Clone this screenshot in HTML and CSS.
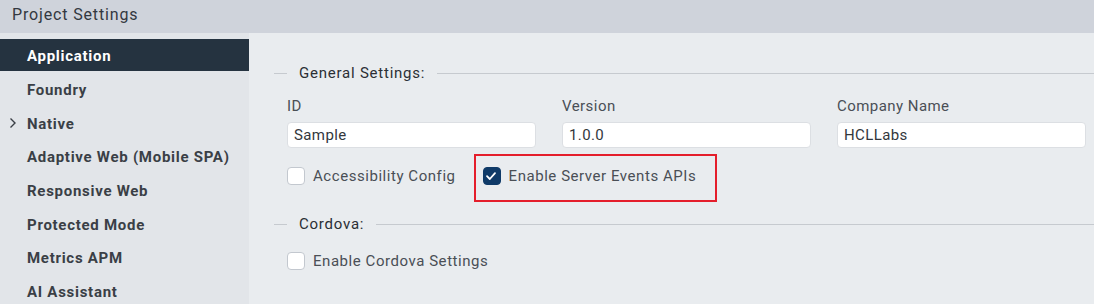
FILE: index.html
```html
<!DOCTYPE html>
<html>
<head>
<meta charset="utf-8">
<link rel="stylesheet" href="styles.css">
</head>
<body>
<div class="app">
  <header class="title-bar">Project Settings</header>
  <div class="body">
    <nav class="sidebar">
      <div class="nav-item active">Application</div>
      <div class="nav-item">Foundry</div>
      <div class="nav-item has-children"><svg class="chev" viewBox="0 0 8 12" width="8" height="12"><path d="M1.5 1.5 L6 6 L1.5 10.5" fill="none" stroke="#3a3f46" stroke-width="1.4"/></svg>Native</div>
      <div class="nav-item">Adaptive Web (Mobile SPA)</div>
      <div class="nav-item">Responsive Web</div>
      <div class="nav-item">Protected Mode</div>
      <div class="nav-item">Metrics APM</div>
      <div class="nav-item">AI Assistant</div>
    </nav>
    <main class="content">
      <section class="group">
        <div class="legend"><span class="lead"></span><span class="legend-text">General Settings:</span><span class="rule"></span></div>
        <div class="group-body">
          <div class="fields">
            <div class="field">
              <label class="field-label">ID</label>
              <div class="input">Sample</div>
            </div>
            <div class="field">
              <label class="field-label">Version</label>
              <div class="input">1.0.0</div>
            </div>
            <div class="field">
              <label class="field-label">Company Name</label>
              <div class="input">HCLLabs</div>
            </div>
          </div>
          <div class="checks">
            <div class="check"><span class="box"></span><span class="check-label">Accessibility Config</span></div>
            <div class="check highlighted"><span class="box checked"><svg viewBox="0 0 18 18" width="18" height="18"><path d="M5 9.2 L7.8 12 L13 6.2" fill="none" stroke="#fff" stroke-width="1.8" stroke-linecap="round" stroke-linejoin="round"/></svg></span><span class="check-label">Enable Server Events APIs</span><span class="mark"></span></div>
          </div>
        </div>
      </section>
      <section class="group cordova">
        <div class="legend"><span class="lead"></span><span class="legend-text">Cordova:</span><span class="rule"></span></div>
        <div class="group-body">
          <div class="checks">
            <div class="check"><span class="box"></span><span class="check-label">Enable Cordova Settings</span></div>
          </div>
        </div>
      </section>
    </main>
  </div>
</div>
</body>
</html>
```

FILE: styles.css
```css
* { box-sizing: border-box; }
html, body { margin: 0; padding: 0; }
body {
  font-family: Roboto, "Noto Sans", sans-serif;
  width: 1094px;
  height: 304px;
  overflow: hidden;
  background: #e9ecef;
}
.app { display: flex; flex-direction: column; height: 304px; }
.title-bar {
  height: 33px;
  background: #cfd3db;
  color: #333840;
  font-size: 16px;
  letter-spacing: 0.85px;
  padding-left: 12px;
  line-height: 30px;
  flex: none;
}
.body { display: flex; flex: 1; min-height: 0; }
.sidebar {
  width: 249px;
  flex: none;
  background: #e2e5e9;
  padding-top: 6px;
}
.nav-item {
  height: 33.7px;
  display: flex;
  align-items: center;
  padding-left: 27px;
  padding-top: 1px;
  font-size: 15px;
  font-weight: 700;
  color: #3a3f46;
  letter-spacing: 0.72px;
  position: relative;
}
.nav-item.active {
  background: #253340;
  color: #ffffff;
  height: 32px;
  margin-bottom: 1.7px;
}
.chev {
  position: absolute;
  left: 9px;
  top: 11px;
}
.content {
  flex: 1;
  padding: 32px 0 0 25px;
}
.legend {
  display: flex;
  align-items: center;
  height: 16px;
}
.lead, .rule { height: 1px; background: #c6cacf; }
.lead { width: 13px; flex: none; }
.rule { flex: 1; }
.legend-text {
  padding: 0 12px;
  font-size: 15px;
  color: #2b2f35;
  letter-spacing: 0.77px;
}
.group-body { padding: 0 8px 0 13px; }
.fields {
  display: grid;
  grid-template-columns: repeat(3, 1fr);
  column-gap: 26px;
  padding-top: 16px;
}
.field-label {
  display: block;
  font-size: 15px;
  color: #4a4f56;
  letter-spacing: 0.45px;
  height: 18px;
  line-height: 18px;
}
.input {
  margin-top: 7px;
  height: 26px;
  background: #ffffff;
  border: 1px solid #dcdfe3;
  border-radius: 4px;
  padding-left: 6px;
  font-size: 15px;
  line-height: 24px;
  color: #33373d;
  letter-spacing: 0.4px;
}
.checks {
  display: flex;
  gap: 27px;
  padding-top: 19px;
}
.check {
  display: flex;
  align-items: center;
  gap: 8px;
  height: 18px;
  position: relative;
}
.box {
  width: 18px;
  height: 18px;
  border: 1.5px solid #c3c8cf;
  border-radius: 4px;
  background: #ffffff;
  flex: none;
  display: flex;
}
.box.checked {
  background: #0f3a68;
  border-color: #0f3a68;
}
.box.checked svg { margin: -1.5px; }
.check-label {
  font-size: 15px;
  color: #4a4f56;
  letter-spacing: 0.55px;
}
.mark {
  position: absolute;
  left: -9px;
  top: -13px;
  width: 243px;
  height: 48px;
  border: 2px solid #e41e2b;
}
.cordova { margin-top: 31px; }
.cordova .checks { padding-top: 20px; }
```
